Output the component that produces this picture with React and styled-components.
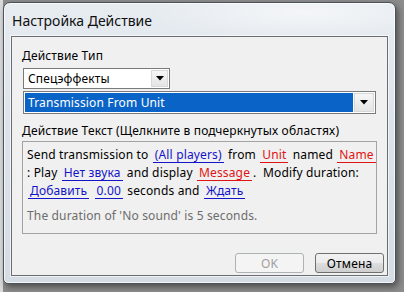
import React from 'react';
import styled, { createGlobalStyle } from 'styled-components';

const Global = createGlobalStyle`
  html, body {
    margin: 0;
    padding: 0;
    width: 404px;
    height: 292px;
    overflow: hidden;
    background: linear-gradient(90deg, #dadada 0 3px, #8c8c8c 3px);
  }
  body {
    font-family: "Noto Sans", "Open Sans", sans-serif;
  }
`;

const Desktop = styled.div`
  padding: 2px 0 0 3px;
`;

const Window = styled.div`
  width: 393px;
  height: 282px;
  box-sizing: border-box;
  border: 1px solid #4a525c;
  border-radius: 7px 7px 5px 5px;
  background:
    radial-gradient(ellipse 220px 40px at 300px 10px, rgba(255,255,255,0.55), rgba(255,255,255,0) 70%),
    linear-gradient(180deg, #e7ecf1 0%, #dde3ea 40%, #d5dce4 100%);
  box-shadow: inset 0 0 0 1px rgba(255,255,255,0.7), 2px 3px 6px rgba(0,0,0,0.45);
  padding: 0 7px 7px 7px;
  display: flex;
  flex-direction: column;
`;

const TitleBar = styled.div`
  height: 33px;
  display: flex;
  align-items: center;
  padding-left: 1px;
  padding-top: 1px;
  font-size: 14px;
  color: #101010;
  box-sizing: border-box;
`;

const Client = styled.div`
  flex: 1;
  background: #f0f0f0;
  border: 1px solid #6a6e73;
  box-shadow: 0 0 0 1px rgba(255,255,255,0.6);
  padding: 11px 3px 2px 10px;
  display: flex;
  flex-direction: column;
  font-size: 12px;
  letter-spacing: 0.15px;
  color: #000;
`;

const Label = styled.div`
  line-height: 16px;
  height: 16px;
  margin-top: ${p => p.$top || 0}px;
`;

const Combo = styled.div`
  margin-top: ${p => p.$top || 0}px;
  margin-left: 1px;
  width: ${p => p.$width}px;
  height: ${p => p.$height}px;
  box-sizing: border-box;
  border: 1px solid #7a7a7a;
  background: #fff;
  padding: 1px;
  display: flex;
`;

const ComboValue = styled.div`
  flex: 1;
  display: flex;
  align-items: center;
  padding-left: 3px;
  background: ${p => (p.$selected ? '#0a64c8' : 'transparent')};
  color: ${p => (p.$selected ? '#fff' : '#000')};
  white-space: nowrap;
`;

const ArrowButton = styled.div`
  width: ${p => p.$w}px;
  box-sizing: border-box;
  margin-left: 1px;
  border: 1px solid #d8d8d8;
  background: linear-gradient(180deg, #f6f6f6, #e4e4e4);
  display: flex;
  align-items: center;
  justify-content: center;
`;

const Arrow = () => (
  <svg width="8" height="5" viewBox="0 0 8 5">
    <path d="M0 0 H8 L4 4.5 Z" fill="#000" />
  </svg>
);

const TextBox = styled.div`
  margin-top: 2px;
  width: 355px;
  height: 93px;
  box-sizing: border-box;
  border: 1px solid #a3a3a3;
  padding: 4px 0 0 4px;
`;

const Line = styled.div`
  line-height: 18px;
  height: 18px;
  white-space: nowrap;
`;

const Note = styled(Line)`
  margin-top: 7px;
  color: #6d6d6d;
`;

const Link = styled.span`
  display: inline-block;
  line-height: 15px;
  padding: 0 2px;
  margin: 0 1px;
  color: ${p => (p.$red ? '#e01414' : '#1414c8')};
  border-bottom: 1px solid ${p => (p.$red ? '#e01414' : '#1414c8')};
`;

const Buttons = styled.div`
  margin-top: auto;
  display: flex;
  justify-content: flex-end;
  gap: 11px;
`;

const Button = styled.div`
  width: 69px;
  height: 20px;
  box-sizing: border-box;
  border: 1px solid ${p => (p.$disabled ? '#adb2b5' : '#707070')};
  border-radius: 3px;
  background: ${p => (p.$disabled ? '#f4f4f4' : 'linear-gradient(180deg, #f2f2f2 0%, #ebebeb 50%, #dddddd 51%, #cfcfcf 100%)')};
  color: ${p => (p.$disabled ? '#a0a0a0' : '#000')};
  display: flex;
  align-items: center;
  justify-content: center;
`;

export default function App() {
  return (
    <>
      <Global />
      <Desktop>
        <Window>
          <TitleBar>Настройка Действие</TitleBar>
          <Client>
            <Label>Действие Тип</Label>
            <Combo $top={4} $width={147} $height={21}>
              <ComboValue>Спецэффекты</ComboValue>
              <ArrowButton $w={17}><Arrow /></ArrowButton>
            </Combo>
            <Combo $top={2} $width={353} $height={23}>
              <ComboValue $selected>Transmission From Unit</ComboValue>
              <ArrowButton $w={20}><Arrow /></ArrowButton>
            </Combo>
            <Label $top={9}>Действие Текст (Щелкните в подчеркнутых областях)</Label>
            <TextBox>
              <Line>
                Send transmission to <Link>(All players)</Link> from <Link $red>Unit</Link> named <Link $red>Name</Link>
              </Line>
              <Line>
                : Play <Link>Нет звука</Link> and display <Link $red>Message</Link>.&nbsp; Modify duration:
              </Line>
              <Line>
                <Link>Добавить</Link> <Link>0.00</Link> seconds and <Link>Ждать</Link>
              </Line>
              <Note>The duration of 'No sound' is 5 seconds.</Note>
            </TextBox>
            <Buttons>
              <Button $disabled>OK</Button>
              <Button>Отмена</Button>
            </Buttons>
          </Client>
        </Window>
      </Desktop>
    </>
  );
}
